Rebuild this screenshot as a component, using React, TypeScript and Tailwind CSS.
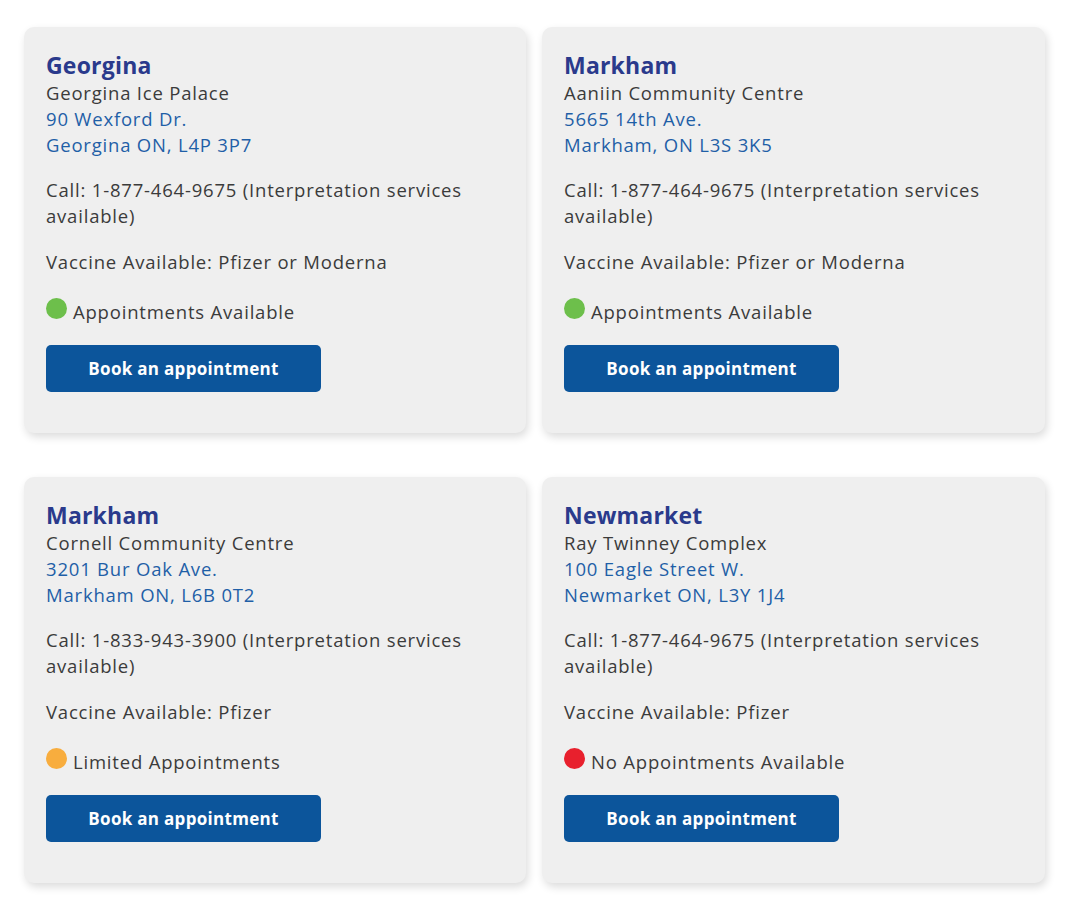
interface Clinic {
  city: string;
  venue: string;
  street: string;
  postal: string;
  phone: string;
  vaccine: string;
  status: 'open' | 'limited' | 'none';
}

const clinics: Clinic[] = [
  {
    city: 'Georgina',
    venue: 'Georgina Ice Palace',
    street: '90 Wexford Dr.',
    postal: 'Georgina ON, L4P 3P7',
    phone: '1-877-464-9675',
    vaccine: 'Pfizer or Moderna',
    status: 'open',
  },
  {
    city: 'Markham',
    venue: 'Aaniin Community Centre',
    street: '5665 14th Ave.',
    postal: 'Markham, ON L3S 3K5',
    phone: '1-877-464-9675',
    vaccine: 'Pfizer or Moderna',
    status: 'open',
  },
  {
    city: 'Markham',
    venue: 'Cornell Community Centre',
    street: '3201 Bur Oak Ave.',
    postal: 'Markham ON, L6B 0T2',
    phone: '1-833-943-3900',
    vaccine: 'Pfizer',
    status: 'limited',
  },
  {
    city: 'Newmarket',
    venue: 'Ray Twinney Complex',
    street: '100 Eagle Street W.',
    postal: 'Newmarket ON, L3Y 1J4',
    phone: '1-877-464-9675',
    vaccine: 'Pfizer',
    status: 'none',
  },
];

const statusInfo = {
  open: { dot: 'bg-[#6dbf4b]', label: 'Appointments Available' },
  limited: { dot: 'bg-[#f8ad3e]', label: 'Limited Appointments' },
  none: { dot: 'bg-[#e8202d]', label: 'No Appointments Available' },
};

function ClinicCard({ clinic }: { clinic: Clinic }) {
  const status = statusInfo[clinic.status];
  return (
    <div className="bg-[#efefef] rounded-[10px] shadow-[2px_4px_8px_rgba(0,0,0,0.14)] pt-[23px] pb-[41px] pl-[22px] pr-[30px] text-[18.5px] tracking-[0.8px] text-[#3b3b3b]">
      <h2 className="text-[23px] leading-[30px] font-bold tracking-[0.2px] text-[#2a3a8c]">{clinic.city}</h2>
      <div className="leading-[26px]">
        <div>{clinic.venue}</div>
        <div className="text-[#1f5fa7]">{clinic.street}</div>
        <div className="text-[#1f5fa7]">{clinic.postal}</div>
      </div>
      <p className="mt-[19px] leading-[26px]">
        Call: {clinic.phone} (Interpretation services available)
      </p>
      <p className="mt-[20px] leading-[26px]">Vaccine Available: {clinic.vaccine}</p>
      <div className="mt-[24px] leading-[26px] flex items-start">
        <span className={`w-[21px] h-[21px] rounded-full mr-[6px] -mt-[1px] shrink-0 ${status.dot}`} />
        <span>{status.label}</span>
      </div>
      <button className="mt-[20px] w-[275px] h-[47px] rounded-[5px] bg-[#0c559b] text-white font-bold text-[17px] tracking-[0.3px]">
        Book an appointment
      </button>
    </div>
  );
}

export default function App() {
  return (
    <div className="bg-white min-h-[905px] pl-6 pt-[27px] font-['Open_Sans',sans-serif]">
      <div className="grid grid-cols-[502px_503px] gap-x-4 gap-y-[44px]">
        {clinics.map((c, i) => (
          <ClinicCard key={i} clinic={c} />
        ))}
      </div>
    </div>
  );
}
